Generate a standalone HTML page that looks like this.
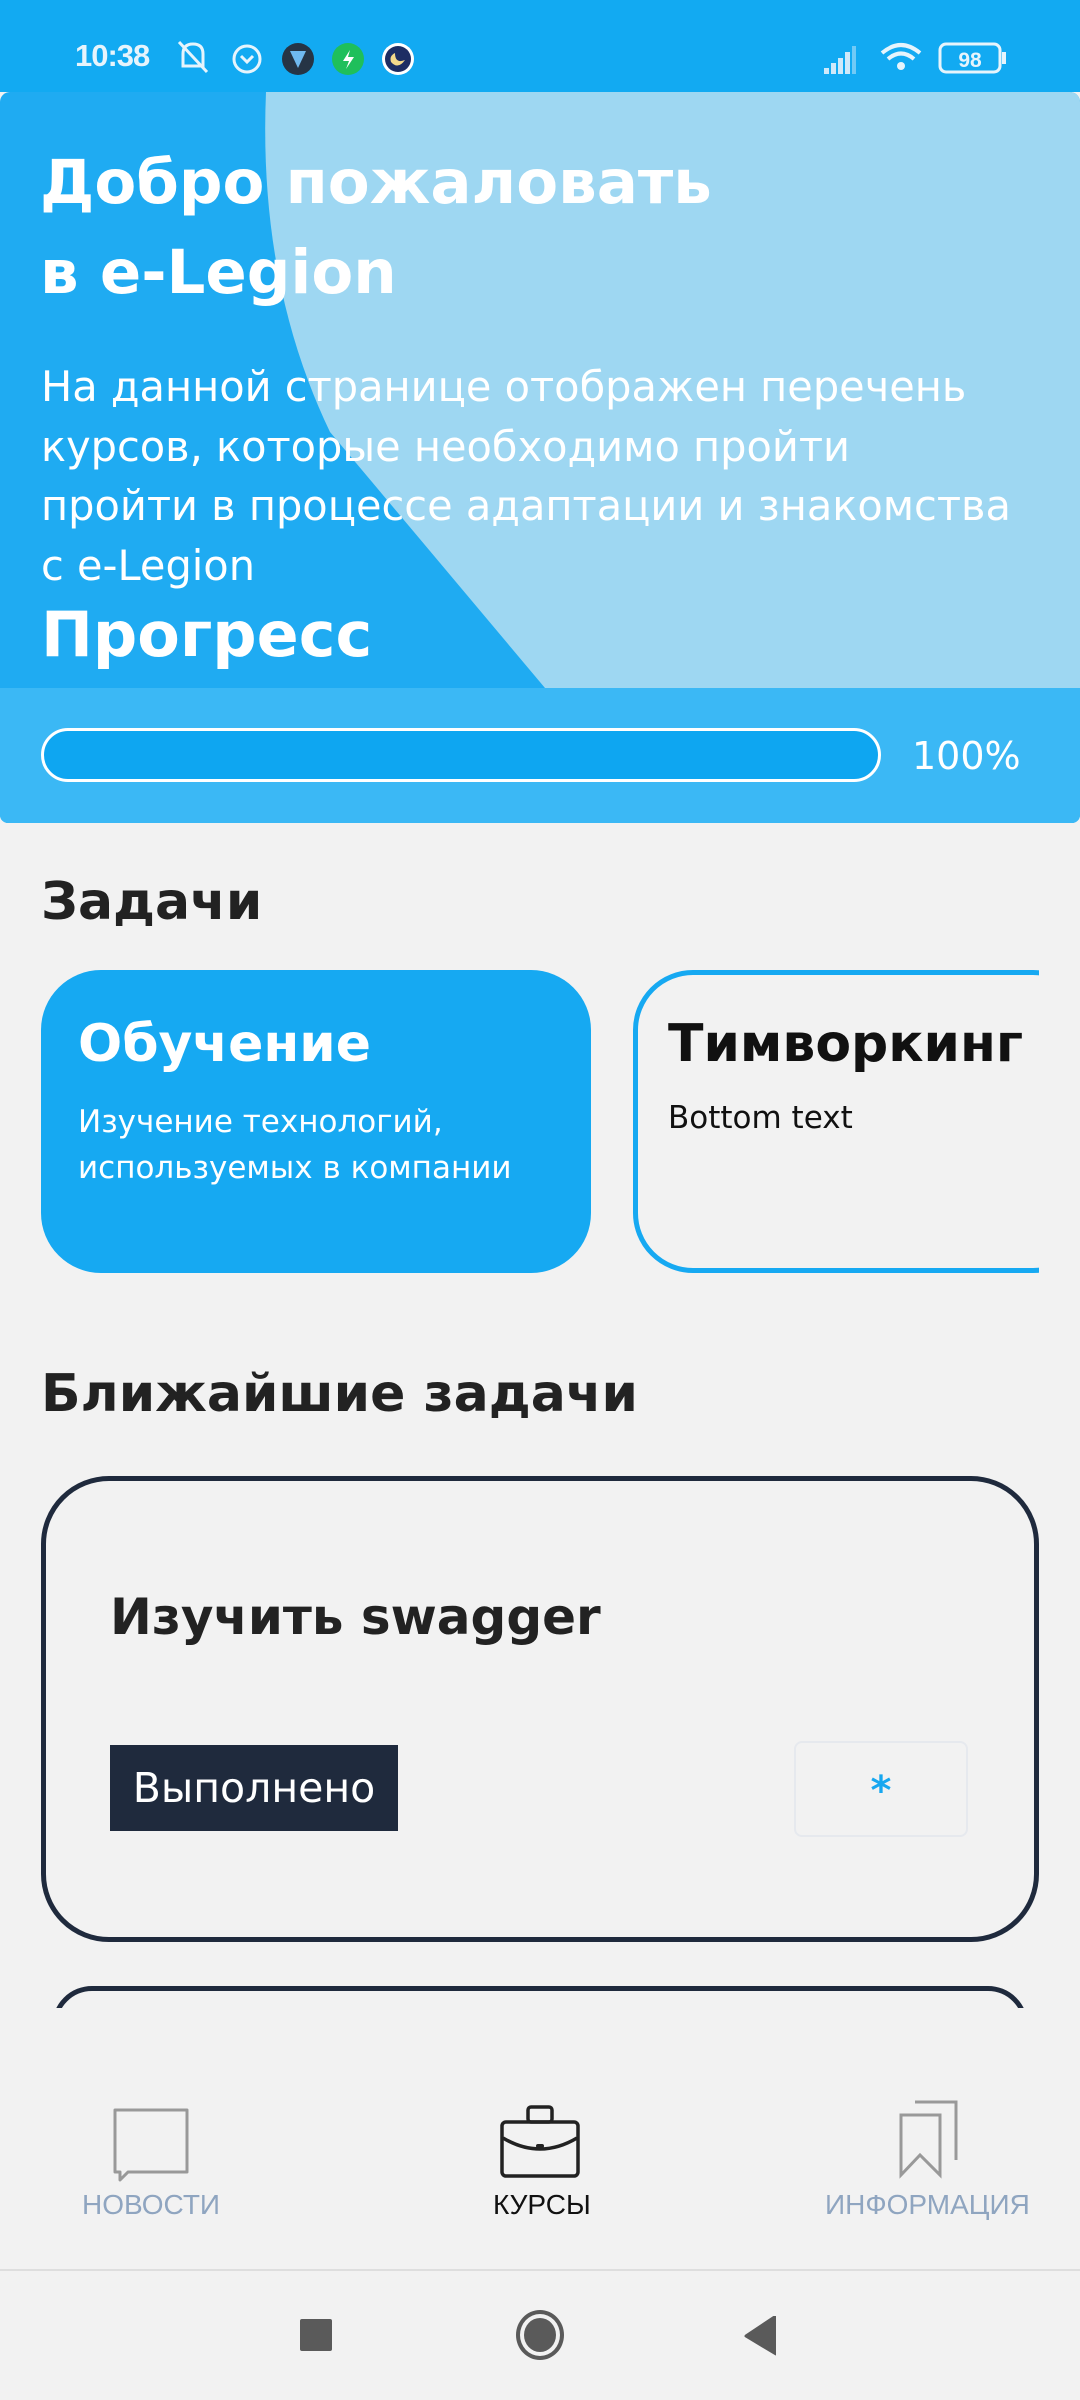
<!DOCTYPE html>
<html><head><meta charset="utf-8"><style>
*{margin:0;padding:0;box-sizing:border-box}
body{width:1080px;height:2400px;background:#f2f2f2;position:relative;overflow:hidden;font-family:"DejaVu Sans","Liberation Sans",sans-serif}
.a{position:absolute;white-space:nowrap}
.l{font-family:"Liberation Sans",sans-serif}
</style></head><body>
<div class="a" style="left:0;top:0;width:1080px;height:92px;background:#12aaf2"></div>
<div class="a l" style="left:75px;top:38px;font-size:31px;font-weight:bold;color:#e6f4fc;letter-spacing:-1px">10:38</div>
<svg class="a" style="left:175px;top:38px" width="240" height="40" viewBox="0 0 240 40">
<g fill="none" stroke="#e6f4fc" stroke-width="3"><path d="M8 28 L8 16 Q8 6 18 6 Q28 6 28 16 L28 28 Z M4 4 L32 34"/><circle cx="72" cy="21" r="13"/><path d="M66 18 L72 24 L78 18"/></g>
<circle cx="123" cy="21" r="16" fill="#263445"/><path d="M115 13 L123 30 L131 13 Z" fill="#6fb9f0"/>
<circle cx="173" cy="21" r="16" fill="#1fbf5b"/><path d="M175 12 L168 23 L174 23 L171 31 L179 19 L173 19 Z" fill="#fff"/>
<circle cx="223" cy="21" r="16" fill="#fff"/><circle cx="223" cy="21" r="13" fill="#1d2d63"/><path d="M216 24 Q223 32 230 22 Q220 26 220 15 Q214 18 216 24Z" fill="#f3d98b"/>
</svg>
<svg class="a" style="left:820px;top:38px" width="190" height="40" viewBox="0 0 190 40">
<g fill="#cfe9fa"><rect x="4" y="30" width="5" height="6"/><rect x="11" y="25" width="5" height="11"/><rect x="18" y="20" width="5" height="16"/><rect x="25" y="14" width="5" height="22"/><rect x="32" y="8" width="4" height="28" opacity=".5"/></g>
<g fill="none" stroke="#e6f4fc" stroke-width="4"><path d="M62 15 Q81 -1 100 15"/><path d="M68 21 Q81 10 94 21"/></g><circle cx="81" cy="28" r="4" fill="#e6f4fc"/>
<rect x="120" y="6" width="60" height="28" rx="6" fill="none" stroke="#e6f4fc" stroke-width="3"/><rect x="182" y="14" width="4" height="12" fill="#e6f4fc"/>
<text x="150" y="29" font-size="21" font-weight="bold" fill="#e6f4fc" text-anchor="middle" font-family="Liberation Sans">98</text>
</svg>
<div class="a" style="left:0;top:92px;width:1080px;height:731px;background:#1fabf2;border-radius:10px 10px 8px 8px;overflow:hidden">
<svg width="1080" height="731" style="position:absolute;left:0;top:0"><path d="M266 0 Q258 190 330 340 L545 596 L1080 596 L1080 0 Z" fill="#9ed7f2"/><rect x="0" y="596" width="1080" height="135" fill="#3bb8f5"/></svg>
</div>
<div class="a" style="left:40px;top:138px;font-size:61px;font-weight:bold;color:#fff;line-height:90px">Добро пожаловать<br>в e-Legion</div>
<div class="a" style="left:41px;top:357px;font-size:41.5px;color:#fff;line-height:59.5px">На данной странице отображен перечень<br>курсов, которые необходимо пройти<br>пройти в процессе адаптации и знакомства<br>с e-Legion</div>
<div class="a" style="left:41px;top:598px;font-size:62px;font-weight:bold;color:#fff">Прогресс</div>
<div class="a" style="left:41px;top:728px;width:840px;height:54px;border:3px solid #fff;border-radius:27px;background:#0ea6f1"></div>
<div class="a" style="left:912px;top:734px;font-size:38px;color:#fff">100%</div>
<div class="a" style="left:41px;top:872px;font-size:52px;font-weight:bold;color:#222">Задачи</div>
<div class="a" style="left:41px;top:970px;width:550px;height:303px;background:#16a9f2;border-radius:60px"></div>
<div class="a" style="left:78px;top:1014px;font-size:52px;font-weight:bold;color:#fff">Обучение</div>
<div class="a" style="left:78px;top:1099px;font-size:31px;color:#fff;line-height:46px">Изучение технологий,<br>используемых в компании</div>
<div class="a" style="left:633px;top:970px;width:460px;height:303px;border:5px solid #16a9f2;border-radius:60px"></div>
<div class="a" style="left:1039px;top:960px;width:41px;height:320px;background:#f2f2f2"></div>
<div class="a" style="left:668px;top:1014px;font-size:52px;font-weight:bold;color:#111">Тимворкинг</div>
<div class="a" style="left:668px;top:1100px;font-size:31px;color:#111">Bottom text</div>
<div class="a" style="left:41px;top:1364px;font-size:52px;font-weight:bold;color:#222">Ближайшие задачи</div>
<div class="a" style="left:41px;top:1476px;width:998px;height:466px;border:5px solid #1f2a3d;border-radius:68px"></div>
<div class="a" style="left:110px;top:1588px;font-size:50px;font-weight:bold;color:#222">Изучить swagger</div>
<div class="a" style="left:110px;top:1745px;width:288px;height:86px;background:#1f2a3d;color:#fff;font-size:41px;line-height:86px;text-align:center">Выполнено</div>
<div class="a" style="left:794px;top:1741px;width:174px;height:96px;border:2px solid #e6e9ee;border-radius:8px;color:#17a7f0;font-size:40px;font-weight:bold;text-align:center;line-height:96px">*</div>
<div class="a" style="left:52px;top:1986px;width:976px;height:80px;border:5px solid #1f2a3d;border-radius:68px"></div>
<div class="a" style="left:0;top:2008px;width:1080px;height:392px;background:#f2f2f2"></div>
<svg class="a" style="left:110px;top:2100px" width="860" height="85" viewBox="0 0 860 85">
<path d="M5 10 L77 10 L77 72 L18 72 L10 80 L10 72 L5 72 Z" fill="none" stroke="#999" stroke-width="3" stroke-linejoin="round"/>
<g fill="none" stroke="#222" stroke-width="3.5"><rect x="392" y="22" width="76" height="54" rx="4"/><rect x="418" y="7" width="24" height="15" rx="3"/><path d="M393 38 Q430 60 467 38"/></g><rect x="426" y="44" width="8" height="4" rx="2" fill="#222"/>
<g fill="none" stroke="#999" stroke-width="3"><path d="M805 2 L846 2 L846 60"/><path d="M791 15 L830 15 L830 75 L810 55 L791 75 Z"/></g>
</svg>
<div class="a l" style="left:82px;top:2189px;font-size:28px;color:#8fa5c0">НОВОСТИ</div>
<div class="a l" style="left:493px;top:2189px;font-size:28px;color:#111">КУРСЫ</div>
<div class="a l" style="left:825px;top:2189px;font-size:28px;color:#8fa5c0">ИНФОРМАЦИЯ</div>
<div class="a" style="left:0;top:2269px;width:1080px;height:2px;background:#dedede"></div>
<div class="a" style="left:300px;top:2319px;width:32px;height:32px;background:#5a5a5a;border-radius:2px"></div>
<div class="a" style="left:516px;top:2310px;width:48px;height:50px;border:4px solid #5a5a5a;border-radius:50%"></div>
<div class="a" style="left:524px;top:2318px;width:32px;height:34px;background:#5a5a5a;border-radius:50%"></div>
<svg class="a" style="left:742px;top:2316px" width="34" height="40"><path d="M34 0 L34 38 L4 20 Z" fill="#5a5a5a" stroke="#5a5a5a" stroke-width="3" stroke-linejoin="round"/></svg>
</body></html>
